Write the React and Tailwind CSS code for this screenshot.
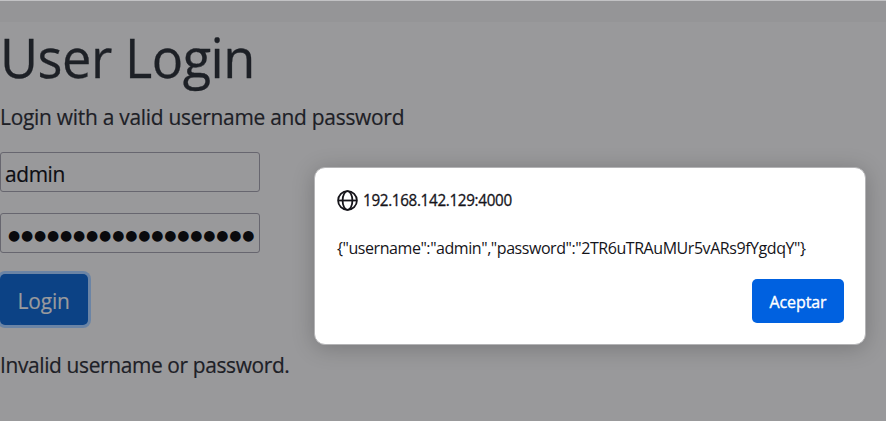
import React, { useState } from "react";

const GlobeIcon = () => {
  return (
    <svg
      width="21"
      height="21"
      viewBox="0 0 21 21"
      fill="none"
      stroke="#15141a"
      strokeWidth="1.8"
      className="shrink-0"
    >
      <circle cx="10.5" cy="10.5" r="9.4" />
      <ellipse cx="10.5" cy="10.5" rx="4.9" ry="9.4" />
      <path d="M1 10.5h19" />
    </svg>
  );
};

const AlertDialog = ({ host, message, onAccept }) => {
  return (
    <div className="absolute left-[314px] top-[167px] w-[552px] h-[178px] rounded-[11px] bg-white border border-[#b4b4b6] shadow-[0_3px_22px_rgba(0,0,0,0.22)] pl-[22px] pr-[21px] pt-[21px] flex flex-col text-[#15141a]">
      <div className="flex items-center h-[22px] gap-[5px]">
        <GlobeIcon />
        <span className="inline-block origin-left scale-x-[0.95] text-[16px] whitespace-nowrap tracking-[-0.33px] [-webkit-text-stroke:0.3px]">
          {host}
        </span>
      </div>
      <p className="mt-[26px] h-[22px] leading-[22px] text-[16px] whitespace-nowrap tracking-[-0.44px]">
        {message}
      </p>
      <button
        className="mt-5 self-end w-[92px] h-11 pt-px rounded-[5px] bg-[#0061e0] text-white text-[16px] tracking-[-0.1px] [-webkit-text-stroke:0.35px]"
        onClick={onAccept}
      >
        Aceptar
      </button>
    </div>
  );
};

const App = () => {
  const [open, setOpen] = useState(true);

  return (
    <div className="relative w-[886px] h-[421px] overflow-hidden bg-[#99999b] font-['Open_Sans','Noto_Sans',sans-serif] text-[#1d2026]">
      <div className="h-[22px] bg-[#959597] border-t border-[#c2c2c4]"></div>

      <h1 className="mt-0.5 h-[66px] leading-[66px] text-[55px] whitespace-nowrap tracking-[-0.5px] [-webkit-text-stroke:0.3px]">
        <span className="inline-block origin-left scale-x-[0.95]">
          User Login
        </span>
      </h1>
      <p className="mt-[9px] h-[34px] leading-[34px] text-[22px] whitespace-nowrap tracking-[-0.27px] [-webkit-text-stroke:0.2px]">
        <span className="inline-block origin-left scale-x-[0.95]">
          Login with a valid username and password
        </span>
      </p>

      <form className="mt-[19px]" onSubmit={(e) => e.preventDefault()}>
        <div className="w-[260px] h-10 border border-[#67666f] rounded-[3px] pl-1 pt-0.5 flex items-center text-[22px] text-[#0d0d12] tracking-[-0.4px] [-webkit-text-stroke:0.2px]">
          <span className="inline-block origin-left scale-x-[0.95]">admin</span>
        </div>
        <div className="mt-[21px] w-[260px] h-10 border border-[#67666f] rounded-[3px] pl-[7px] pt-1 flex items-center text-[#0a0a0d]">
          <span className="font-['DejaVu_Sans',sans-serif] text-[14px] tracking-[0.8px] whitespace-nowrap">
            ●●●●●●●●●●●●●●●●●●●
          </span>
        </div>
        <button
          className="mt-[21px] block w-[88px] h-[51px] pt-0.5 rounded-[5px] bg-[#0c4285] shadow-[0_0_0_3px_#6b84a5] text-[#9a9a9d] text-[22px] tracking-[-0.1px] [-webkit-text-stroke:0.2px]"
          onClick={() => setOpen(true)}
        >
          <span className="inline-block scale-x-[0.95]">Login</span>
        </button>
      </form>

      <p className="mt-[22px] h-[34px] leading-[34px] text-[22px] whitespace-nowrap tracking-[-0.38px] [-webkit-text-stroke:0.2px]">
        <span className="inline-block origin-left scale-x-[0.95]">
          Invalid username or password.
        </span>
      </p>

      {open && (
        <AlertDialog
          host="192.168.142.129:4000"
          message={'{"username":"admin","password":"2TR6uTRAuMUr5vARs9fYgdqY"}'}
          onAccept={() => setOpen(false)}
        />
      )}
    </div>
  );
};

export default App;
